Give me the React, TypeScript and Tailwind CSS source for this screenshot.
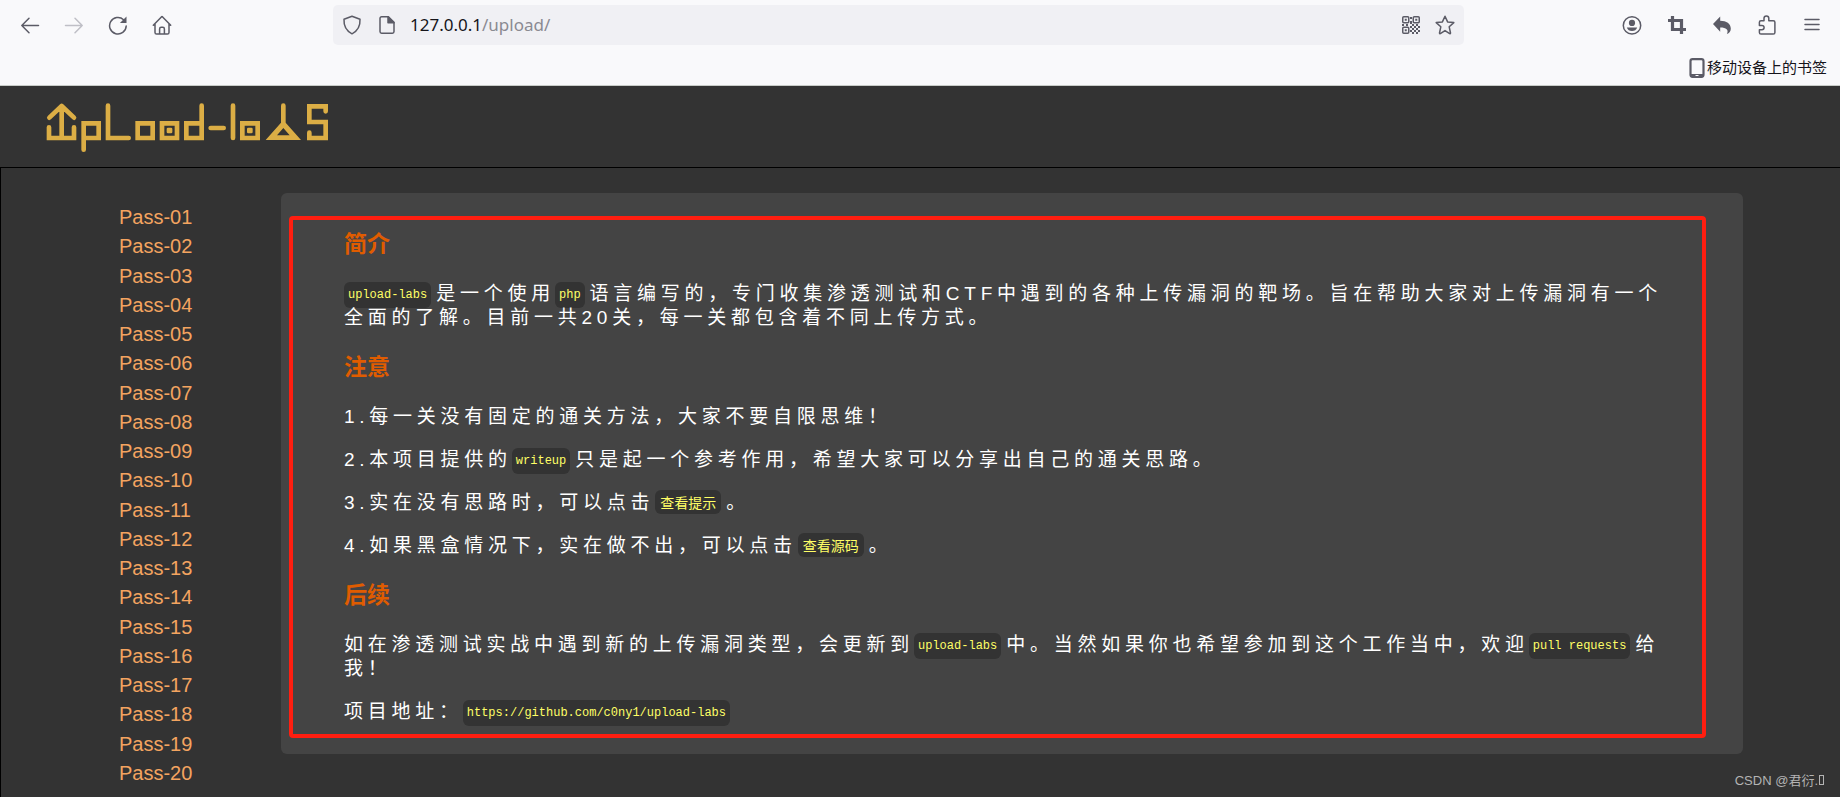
import type { ReactNode, SVGProps } from "react";

const passes = Array.from({ length: 20 }, (_, i) => `Pass-${String(i + 1).padStart(2, "0")}`);

function Icon({ children, ...props }: SVGProps<SVGSVGElement>) {
  return (
    <svg
      viewBox="0 0 20 20"
      className="size-5"
      fill="none"
      stroke="currentColor"
      strokeWidth="1.5"
      strokeLinecap="round"
      strokeLinejoin="round"
      aria-hidden="true"
      {...props}
    >
      {children}
    </svg>
  );
}

function ToolButton({ label, disabled, children }: { label: string; disabled?: boolean; children: ReactNode }) {
  return (
    <button type="button" aria-label={label} disabled={disabled} className="disabled:text-[#bfbfc6]">
      {children}
    </button>
  );
}

function QrFinder({ x, y }: { x: number; y: number }) {
  return (
    <>
      <rect x={x + 0.75} y={y + 0.75} width="6" height="6" rx="1" fill="none" stroke="currentColor" strokeWidth="1.5" />
      <rect x={x + 2.75} y={y + 2.75} width="2" height="2" />
    </>
  );
}

function BrowserBar() {
  return (
    <header className="border-b border-[#c8ccc8] bg-[#f9f9fb] text-[#5b5b66]">
      <div className="flex h-[50px] items-center py-[5px] pr-[18px] pl-5">
        <div className="flex w-[313px] items-center gap-6">
          <ToolButton label="后退">
            <Icon>
              <path d="M18.5 10.500H1.8M9 3.300 1.8 10.500 9 17.700" />
            </Icon>
          </ToolButton>
          <ToolButton label="前进" disabled>
            <Icon>
              <path d="M1.5 10.500h16.700M11 3.300l7.200 7.200-7.200 7.200" />
            </Icon>
          </ToolButton>
          <ToolButton label="刷新">
            <Icon>
              <path d="M18.2 11A8.300 8.300 0 1 1 15.600 4.700" />
              <path d="M18.500 1.500v6.600h-6.600z" fill="currentColor" stroke="none" />
            </Icon>
          </ToolButton>
          <ToolButton label="主页">
            <Icon>
              <path d="M1.3 10.300 9.400 1.900a.9.9 0 0 1 1.200 0L18.700 10.300M3 8.900v8.600c0 .9.7 1.600 1.600 1.600h10.800c.9 0 1.600-.7 1.600-1.600V8.900M7.600 18.900v-5a1.600 1.600 0 0 1 1.600-1.600h1.600a1.600 1.600 0 0 1 1.600 1.600v5" />
            </Icon>
          </ToolButton>
        </div>

        <div className="flex h-10 flex-1 items-center rounded-[5px] bg-[#f0f0f4] px-[9px]">
          <Icon>
            <path d="M10 1.200 18 4.300c.3 5.600-1.600 11.300-8 14.500C3.600 15.600 1.700 9.900 2 4.300z" />
          </Icon>
          <Icon className="ml-[15px] size-5">
            <path d="M4.600 1.800h6.800L17 7.400v9.200c0 .9-.7 1.600-1.600 1.600H4.600c-.9 0-1.600-.7-1.600-1.600V3.400c0-.9.7-1.600 1.600-1.600z" />
            <path d="M11 1.800v6h6z" fill="currentColor" />
          </Icon>
          <div className="ml-[13px] font-['Noto_Sans',sans-serif] text-[17px] text-[#8a8a92]">
            <span className="text-[#15141a]">127.0.0.1</span>/upload/
          </div>
          <div className="ml-auto flex items-center gap-[15px]">
            <ToolButton label="二维码">
              <svg viewBox="0 0 18 18" className="size-[18px]" fill="currentColor" aria-hidden="true">
                <QrFinder x={0} y={0} />
                <QrFinder x={10.5} y={0} />
                <QrFinder x={0} y={10.5} />
                <path d="M8 1h2v2H8zM8 5h2v3H8zM0 8h2v2H0zM4 8h2v2H4zM10 8h2v2h-2zM14 8h2v2h-2zM8 10h2v2H8zM12 10h2v2h-2zM16 10h2v2h-2zM10 12h2v2h-2zM14 12h2v2h-2zM8 14h2v2H8zM12 14h2v2h-2zM16 14h2v2h-2zM10 16h2v2h-2zM14 16h2v2h-2z" />
              </svg>
            </ToolButton>
            <ToolButton label="收藏">
              <Icon>
                <path d="M10 1.200l2.600 5.700 6.200.7-4.600 4.200 1.300 6.200c0 .6-.4.800-.8.600L10 15.600l-4.700 3c-.4.200-.8 0-.8-.6l1.300-6.200L1.200 7.600l6.200-.7z" />
              </Icon>
            </ToolButton>
          </div>
        </div>

        <div className="ml-[158px] flex items-center gap-[25px]">
          <ToolButton label="账户">
            <Icon>
              <circle cx="10" cy="10.400" r="8.700" />
              <circle cx="10" cy="7.900" r="3.100" fill="currentColor" stroke="none" />
              <path d="M4.800 12.400h10.400c-.8 2.300-2.700 3.600-5.200 3.600s-4.400-1.300-5.200-3.600z" fill="currentColor" stroke="none" />
            </Icon>
          </ToolButton>
          <ToolButton label="截图">
            <Icon strokeWidth="3.200" strokeLinecap="butt" strokeLinejoin="miter">
              <path d="M5.500 1v13.500H19M1 5.500h13.500V19" />
            </Icon>
          </ToolButton>
          <ToolButton label="撤销">
            <Icon>
              <path d="M8.200 1.500v4.200c6.200 0 10.600 2.800 10.600 8 0 2.500-1.500 4.400-3.900 5.400 2.100-4.400-.6-6.600-6.700-6.600v4.200L1 9.100z" fill="currentColor" stroke="none" />
            </Icon>
          </ToolButton>
          <ToolButton label="扩展">
            <Icon>
              <path d="M7 5.700V3.300a2.400 2.400 0 0 1 4.800 0v2.400h4.500c.9 0 1.600.7 1.600 1.600v10.200c0 .9-.7 1.600-1.600 1.600H4c-.9 0-1.600-.7-1.600-1.600v-2.700h2.500a2.200 2.200 0 0 0 0-4.400H2.400V7.300c0-.9.7-1.600 1.600-1.600z" />
            </Icon>
          </ToolButton>
          <ToolButton label="菜单">
            <Icon>
              <path d="M3 4.500h14M3 9.500h14M3 14.500h14" />
            </Icon>
          </ToolButton>
        </div>
      </div>

      <div className="flex h-[35px] justify-end pr-[13px]">
        <a href="#bookmarks" className="flex h-9 items-center gap-[2px] text-[15px] text-[#15141a]">
          <svg viewBox="0 0 16 20" className="h-5 w-4 text-[#5b5b66]" aria-hidden="true">
            <rect x="1.500" y="1.200" width="13" height="17.600" rx="2" fill="none" stroke="currentColor" strokeWidth="2.200" />
            <path d="M1.500 16h13v2.500h-13z" fill="currentColor" />
            <path d="M6.500 17.500h3" stroke="#f9f9fb" />
          </svg>
          移动设备上的书签
        </a>
      </div>
    </header>
  );
}

function Logo() {
  return (
    <svg viewBox="132 60 864 165" className="h-[55px] w-[288px]" role="img" aria-label="upload-labs">
      <g fill="none" stroke="#dcae45" strokeWidth="14" strokeLinecap="round" strokeLinejoin="miter">
        <path d="M147 142v32h75v-32M185 82v92" />
        <path d="M148 113l37-35 37 35" strokeLinejoin="round" />
        <path d="M178 78h14l12 18h-38z" fill="#dcae45" stroke="none" />
        <path d="M251 209v-79h45v44h-45" />
        <path d="M324 77v97h62" />
        <path d="M413 130h45v44h-45z" />
        <path d="M486 130h45v44h-45z" />
        <path d="M605 77v97h-46v-44h46" />
        <path d="M632 144h39" />
        <path d="M699 77v97" />
        <path d="M727 130h46v44h-46z" />
        <path d="M850 77v58" />
        <path d="M977 94V79h-49v47h49v48h-49v-16" />
      </g>
      <path d="M843 128h14l46 52H797zM850 144l-19 22h38z" fill="#dcae45" fillRule="evenodd" />
      <rect x="500" y="143" width="17" height="17" rx="4" fill="#dcae45" />
      <rect x="741" y="143" width="17" height="17" rx="4" fill="#dcae45" />
    </svg>
  );
}

function Code({ children, cjk }: { children: ReactNode; cjk?: boolean }) {
  return (
    <code
      className={
        cjk
          ? "mr-[5px] ml-px rounded-md bg-[#333] px-[5px] py-[2px] align-[1px] font-['Noto_Sans_CJK_SC',sans-serif] text-[14px] leading-none tracking-normal text-[#ffff66]"
          : "mr-[5px] rounded-md bg-[#333] px-1 py-[6px] align-[2px] font-['Liberation_Mono',monospace] text-[12px] leading-none tracking-normal whitespace-nowrap text-[#ffff66]"
      }
    >
      {children}
    </code>
  );
}

function Section({ title, children }: { title: string; children: ReactNode }) {
  return (
    <section>
      <h3 className="mb-[23px] text-[23px] leading-[30px] font-bold text-[#e05c00]">{title}</h3>
      <div className="flex flex-col gap-[19px] text-[19px] leading-[24px] tracking-[0.25em] text-white">{children}</div>
    </section>
  );
}

export default function App() {
  return (
    <div className="flex min-h-screen flex-col bg-[#333] font-['Liberation_Sans','Noto_Sans_CJK_SC',sans-serif]">
      <BrowserBar />
      <div className="flex h-[81px] items-start pt-[14px] pl-11">
        <a href="#home">
          <Logo />
        </a>
      </div>

      <main className="relative flex flex-1 items-stretch border-t border-l border-black pr-[97px]">
        <nav aria-label="关卡" className="w-[280px] shrink-0 pt-[35px] pb-[9px] pl-[118px]">
          <ul className="flex h-full flex-col justify-between text-[20px] leading-[29px]">
            {passes.map((p) => (
              <li key={p}>
                <a href={`#${p}`} className="text-[#f4a460]">
                  {p}
                </a>
              </li>
            ))}
          </ul>
        </nav>

        <article className="relative mt-[25px] flex flex-1 flex-col gap-[22px] self-start rounded-md bg-[#444] px-[63px] pt-9 pb-[30px]">
          <Section title="简介">
            <p>
              <Code>upload-labs</Code>是一个使用<Code>php</Code>
              语言编写的，专门收集渗透测试和CTF中遇到的各种上传漏洞的靶场。旨在帮助大家对上传漏洞有一个全面的了解。目前一共20关，每一关都包含着不同上传方式。
            </p>
          </Section>
          <Section title="注意">
            <p>1.每一关没有固定的通关方法，大家不要自限思维！</p>
            <p>
              2.本项目提供的<Code>writeup</Code>只是起一个参考作用，希望大家可以分享出自己的通关思路。
            </p>
            <p>
              3.实在没有思路时，可以点击<Code cjk>查看提示</Code>。
            </p>
            <p>
              4.如果黑盒情况下，实在做不出，可以点击<Code cjk>查看源码</Code>。
            </p>
          </Section>
          <Section title="后续">
            <p>
              如在渗透测试实战中遇到新的上传漏洞类型，会更新到<Code>upload-labs</Code>
              中。当然如果你也希望参加到这个工作当中，欢迎<Code>pull requests</Code>给我！
            </p>
            <p>
              项目地址：<Code>https://github.com/c0ny1/upload-labs</Code>
            </p>
          </Section>
          <div className="pointer-events-none absolute top-[23px] right-[37px] bottom-4 left-2 rounded-[4px] border-4 border-[#ff1e10]" />
        </article>

        <div className="absolute right-4 bottom-[6px] text-[13px] leading-5 text-[#b4b4b4]">
          CSDN @君衍.<span className="ml-px inline-block h-[10px] w-[5px] border border-[#b4b4b4]" />
        </div>
      </main>
    </div>
  );
}
